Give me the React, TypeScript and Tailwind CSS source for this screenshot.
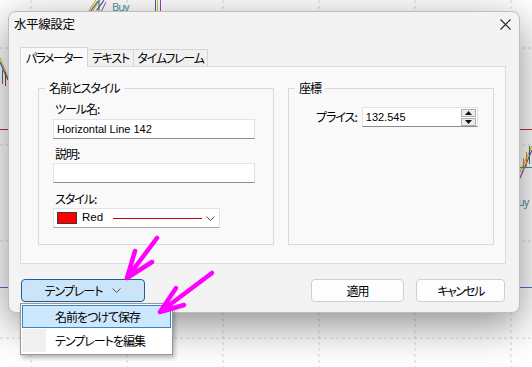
import React from 'react'

// Chart behind the dialog: only its edges are visible around the window.
function ChartBackground() {
  const vx = [31, 127, 223, 319, 415, 511]
  const hy = [48, 145, 241, 338]
  return (
    <svg className="absolute inset-0" width={532} height={367} aria-hidden>
      <rect x={0} y={0} width={532} height={367} fill="#ffffff" />
      {vx.map((x) => (
        <line key={`v${x}`} x1={x} y1={0} x2={x} y2={367} stroke="#d6d6d6" strokeWidth={1} strokeDasharray="3 3" />
      ))}
      {hy.map((y) => (
        <line key={`h${y}`} x1={0} y1={y} x2={532} y2={y} stroke="#d6d6d6" strokeWidth={1} strokeDasharray="3 3" />
      ))}
      <line x1={0} y1={129.5} x2={532} y2={129.5} stroke="#d42a2a" strokeWidth={1} />
      <line x1={0} y1={287.5} x2={532} y2={287.5} stroke="#4a72c4" strokeWidth={1} />

      {/* top candles + Buy label */}
      <path d="M88 12 L96 0 M92 12 L100 0 M95 12 L103 2" stroke="#e3c21a" strokeWidth={1.2} fill="none" />
      <path d="M90 12 L98 1 M97 10 L104 0" stroke="#3b5fd0" strokeWidth={1.2} fill="none" />
      <path d="M101 12 L106 2" stroke="#9b3fc7" strokeWidth={1} fill="none" />
      <line x1={99} y1={0} x2={99} y2={12} stroke="#2f7d6f" strokeWidth={1} />
      <text x={112} y={11} fontSize={11} fill="#4b9aa5" fontFamily="'Noto Sans', sans-serif">Buy</text>
      <line x1={155.5} y1={0} x2={155.5} y2={12} stroke="#3b5fd0" strokeWidth={1} />
      <line x1={157.5} y1={0} x2={157.5} y2={12} stroke="#e3c21a" strokeWidth={1} />
      <line x1={160.5} y1={0} x2={160.5} y2={12} stroke="#9b3fc7" strokeWidth={1} />

      {/* left edge candles */}
      <path d="M0 58 L8 78" stroke="#e3c21a" strokeWidth={1.2} fill="none" />
      <path d="M0 62 L8 80" stroke="#3b5fd0" strokeWidth={1.2} fill="none" />
      <line x1={2.5} y1={70} x2={2.5} y2={84} stroke="#2f7d6f" strokeWidth={1} />
      <line x1={5.5} y1={72} x2={5.5} y2={86} stroke="#d42a2a" strokeWidth={1} />

      {/* right edge candles */}
      <path d="M520 178 L532 150" stroke="#9b3fc7" strokeWidth={1.2} fill="none" />
      <path d="M520 172 L532 146" stroke="#e3c21a" strokeWidth={1.2} fill="none" />
      <line x1={523.5} y1={158} x2={523.5} y2={172} stroke="#e08a2e" strokeWidth={1} />
      <line x1={526.5} y1={152} x2={526.5} y2={168} stroke="#e08a2e" strokeWidth={1} />
      <line x1={529.5} y1={146} x2={529.5} y2={164} stroke="#2f7d6f" strokeWidth={1} />
      <line x1={520} y1={167.5} x2={532} y2={167.5} stroke="#2aa3a3" strokeWidth={1} />
      <text x={518} y={206} fontSize={11} fill="#4b9aa5" fontFamily="'Noto Sans', sans-serif">uy</text>
    </svg>
  )
}

function Field({ children, className = '' }: { children?: React.ReactNode; className?: string }) {
  return (
    <div className={`h-[20px] bg-white border border-[#e2e2e2] border-b-[#8c8c8c] flex items-center ${className}`}>
      {children}
    </div>
  )
}

function SpinButton({ down }: { down?: boolean }) {
  return (
    <div className="w-[15px] h-[8px] bg-[#ececec] border border-[#b0b0b0] flex items-center justify-center">
      <svg width={7} height={4} viewBox="0 0 7 4" aria-hidden>
        <path d={down ? 'M0 0 L7 0 L3.5 4 Z' : 'M0 4 L7 4 L3.5 0 Z'} fill="#111" />
      </svg>
    </div>
  )
}

function Chevron({ className = '' }: { className?: string }) {
  return (
    <svg width={9} height={5} viewBox="0 0 9 5" className={className} aria-hidden>
      <path d="M0.5 0.5 L4.5 4.5 L8.5 0.5" stroke="#555" strokeWidth={1} fill="none" />
    </svg>
  )
}

export default function App() {
  return (
    <div className="relative w-[532px] h-[367px] overflow-hidden bg-white text-[12px] text-black tracking-[-1px] font-['Noto_Sans_CJK_JP','Noto_Sans',sans-serif] font-features-['palt'] [font-feature-settings:'palt'_1]">
      <ChartBackground />

      {/* dialog window */}
      <div className="absolute left-[8px] top-[11px] w-[512px] h-[302px] rounded-[8px] bg-[#f3f3f3] border border-[#bdbdbd] shadow-[0_12px_40px_rgba(0,0,0,0.45)] flex flex-col">
        <div className="h-[25px] pl-[5px] pr-[8px] flex items-center justify-between">
          <span className="text-[12.5px] leading-none tracking-[-0.4px]">水平線設定</span>
          <svg width={11} height={11} viewBox="0 0 11 11" aria-hidden>
            <path d="M0.5 0.5 L10.5 10.5 M10.5 0.5 L0.5 10.5" stroke="#222" strokeWidth={1.1} />
          </svg>
        </div>

        {/* tabs */}
        <div className="mt-[10px] ml-[11px] flex items-end h-[19px] whitespace-nowrap">
          <div className="relative z-10 -mb-px w-[68px] h-[20px] bg-[#f9f9f9] border border-b-0 border-[#d6d6d6] flex items-center justify-center leading-none tracking-[-1.6px]">
            パラメーター
          </div>
          <div className="w-[46px] h-[17px] bg-[#f0f0f0] border border-l-0 border-b-0 border-[#d6d6d6] flex items-center justify-center leading-none tracking-[-1.2px]">
            テキスト
          </div>
          <div className="w-[74px] h-[17px] bg-[#f0f0f0] border border-l-0 border-b-0 border-[#d6d6d6] flex items-center justify-center leading-none tracking-[-1.2px]">
            タイムフレーム
          </div>
        </div>

        {/* tab page */}
        <div className="mx-[11px] w-[486px] h-[198px] bg-[#f9f9f9] border border-[#dcdcdc] pt-[13px] pl-[17px] flex gap-[14px]">
          <fieldset className="w-[236px] h-[165px] border border-[#d9d9d9]">
            <legend className="ml-[6px] px-[4px] leading-[16px]">名前とスタイル</legend>
            <div className="pt-[5px] pl-[14px] flex flex-col items-start">
              <div className="pl-[2px] leading-[16px]">ツール名:</div>
              <Field className="mt-[2px] w-[202px] pl-[3px] text-[11px] tracking-normal font-['Liberation_Sans',sans-serif]">Horizontal Line 142</Field>
              <div className="mt-[7px] pl-[2px] leading-[16px]">説明:</div>
              <Field className="mt-[1px] w-[202px]" />
              <div className="mt-[8px] pl-[2px] leading-[16px]">スタイル:</div>
              <div className="mt-[1px] w-[167px] h-[20px] bg-white border border-[#e2e2e2] border-b-[#a8a8a8] flex items-center pl-[3px] pr-[3px]">
                <div className="w-[20px] h-[12px] bg-[#ff0000] border border-[#3a3a3a]" />
                <span className="ml-[5px] leading-none text-[11.5px] tracking-normal font-['Liberation_Sans',sans-serif]">Red</span>
                <div className="ml-[10px] w-[89px] h-px bg-[#c00000]" />
                <Chevron className="ml-auto mr-[1px]" />
              </div>
            </div>
          </fieldset>

          <fieldset className="w-[206px] h-[165px] border border-[#d9d9d9]">
            <legend className="ml-[6px] px-[4px] leading-[16px]">座標</legend>
            <div className="pt-[11px] pl-[27px] flex items-center">
              <span className="leading-none">プライス:</span>
              <Field className="ml-[5px] w-[116px] pl-[3px] text-[11px] tracking-normal font-['Liberation_Sans',sans-serif]">
                <span className="flex-1">132.545</span>
                <div className="flex flex-col gap-[1px] mr-[1px]">
                  <SpinButton />
                  <SpinButton down />
                </div>
              </Field>
            </div>
          </fieldset>
        </div>

        {/* bottom buttons */}
        <div className="mt-[15px] pl-[12px] pr-[14px] flex items-center">
          <div className="w-[124px] h-[23px] rounded-[4px] bg-[#cce4f7] border border-[#1a5f9c] flex items-center justify-center gap-[10px]">
            <span className="leading-none">テンプレート</span>
            <Chevron />
          </div>
          <div className="ml-auto w-[93px] h-[23px] rounded-[4px] bg-[#fdfdfd] border border-[#d0d0d0] flex items-center justify-center leading-none">
            適用
          </div>
          <div className="ml-[12px] w-[89px] h-[23px] rounded-[4px] bg-[#fdfdfd] border border-[#d0d0d0] flex items-center justify-center leading-none tracking-[-1.6px]">
            キャンセル
          </div>
        </div>
      </div>

      {/* template dropdown menu */}
      <div className="absolute left-[20px] top-[303px] w-[153px] h-[52px] bg-white border border-[#979797] p-[1px] shadow-[2px_3px_4px_rgba(0,0,0,0.25)]">
        <div className="h-[23px] bg-[#cce8ff] border border-[#3a82c0] flex items-center pl-[32px] leading-none">
          名前をつけて保存
        </div>
        <div className="mt-px h-[23px] flex items-stretch">
          <div className="w-[24px] bg-[#f0f0f0]" />
          <div className="pl-[9px] flex items-center leading-none">テンプレートを編集</div>
        </div>
      </div>

      {/* magenta annotation arrows */}
      <svg className="absolute inset-0 pointer-events-none" width={532} height={367} aria-hidden>
        <g stroke="#ff00ff" strokeWidth={4.5} strokeLinecap="round" strokeLinejoin="round" fill="none">
          <path d="M157 238 L127 278 M127 278 L135 251 M127 278 L152 262" />
          <path d="M212 273 L160 312 M160 312 L176 288 M160 312 L184 305" />
        </g>
      </svg>
    </div>
  )
}
